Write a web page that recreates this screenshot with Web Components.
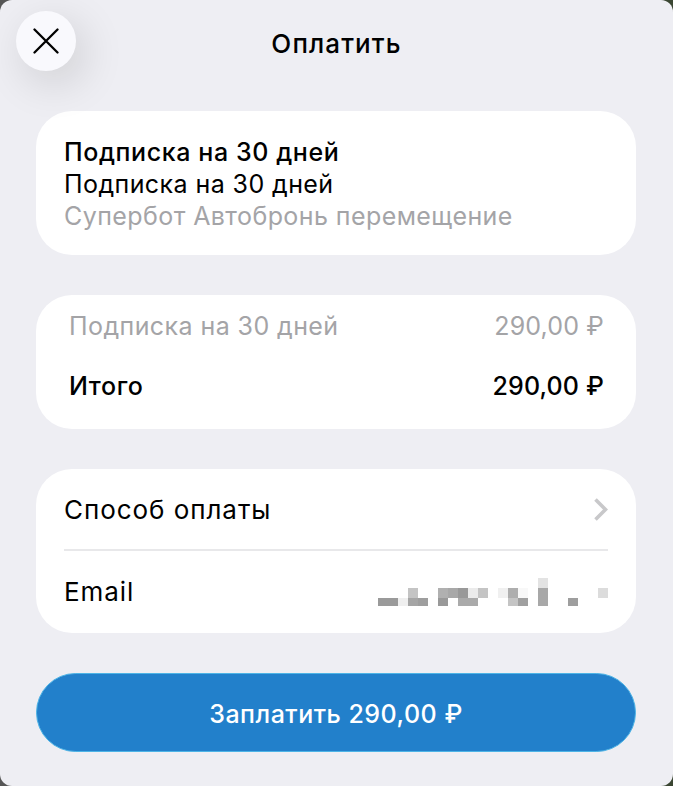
<!DOCTYPE html>
<html lang="ru">
<head>
<meta charset="utf-8">
<title>Оплатить</title>
<style>
    html, body { margin: 0; height: 100%; }
    body {
        font-family: Inter, "Noto Sans", "Liberation Sans", sans-serif;
        background: linear-gradient(to right, #565656 50%, #3a4632 50%);
    }
</style>
</head>
<body>
<pay-sheet>
    <pay-card>
        <product-info title-text="Подписка на 30 дней" line="Подписка на 30 дней" note="Супербот Автобронь перемещение"></product-info>
    </pay-card>
    <pay-card>
        <price-summary name="Подписка на 30 дней" price="290,00 ₽" total="290,00 ₽"></price-summary>
    </pay-card>
    <pay-card>
        <pay-options></pay-options>
    </pay-card>
    <pay-button>Заплатить 290,00 ₽</pay-button>
</pay-sheet>

<script>
class PaySheet extends HTMLElement {
    constructor() {
        super();
        this.attachShadow({ mode: 'open' });
        this.shadowRoot.innerHTML = `
            <style>
                :host {
                    display: block;
                    position: relative;
                    width: 673px;
                    height: 786px;
                    box-sizing: border-box;
                    overflow: hidden;
                    background: #eeeef3;
                    border-radius: 12px;
                }
                header {
                    display: flex;
                    justify-content: center;
                    align-items: center;
                    height: 87px;
                    font-size: 26px;
                    font-weight: 500;
                    letter-spacing: 1.1px;
                    color: #000;
                }
                .close {
                    position: absolute;
                    left: 16px;
                    top: 11px;
                    width: 60px;
                    height: 60px;
                    border-radius: 50%;
                    background: #f9f9fd;
                    box-shadow: 8px 12px 44px rgba(0, 0, 0, 0.14);
                    display: flex;
                    align-items: center;
                    justify-content: center;
                }
                .content {
                    display: flex;
                    flex-direction: column;
                    gap: 40px;
                    padding: 24px 37px 0 36px;
                }
            </style>
            <header>Оплатить</header>
            <div class="close">
                <svg width="26" height="26" viewBox="0 0 26 26" fill="none" stroke="#000" stroke-width="2.3" stroke-linecap="round">
                    <path d="M1.5 1.5 L24.5 24.5 M24.5 1.5 L1.5 24.5"/>
                </svg>
            </div>
            <div class="content"><slot></slot></div>
        `;
    }
}

class PayCard extends HTMLElement {
    constructor() {
        super();
        this.attachShadow({ mode: 'open' });
        this.shadowRoot.innerHTML = `
            <style>
                :host {
                    display: block;
                    background: #fff;
                    border-radius: 36px;
                }
            </style>
            <slot></slot>
        `;
    }
}

class ProductInfo extends HTMLElement {
    constructor() {
        super();
        this.attachShadow({ mode: 'open' });
    }

    connectedCallback() {
        this.shadowRoot.innerHTML = `
            <style>
                :host {
                    display: block;
                    padding: 25px 28px 23px;
                    font-size: 25px;
                    line-height: 32px;
                    letter-spacing: 0.42px;
                    color: #000;
                }
                .title { font-weight: 500; letter-spacing: 0.6px; }
                .note { color: #a4a4a7; }
            </style>
            <div class="title">${this.getAttribute('title-text')}</div>
            <div>${this.getAttribute('line')}</div>
            <div class="note">${this.getAttribute('note')}</div>
        `;
    }
}

class PriceSummary extends HTMLElement {
    constructor() {
        super();
        this.attachShadow({ mode: 'open' });
    }

    connectedCallback() {
        this.shadowRoot.innerHTML = `
            <style>
                :host {
                    display: flex;
                    flex-direction: column;
                    gap: 28px;
                    padding: 15px 32px 27px 33px;
                    font-size: 25px;
                    line-height: 32px;
                    letter-spacing: 0.42px;
                }
                .row { display: flex; justify-content: space-between; }
                .row span:last-child { letter-spacing: 0.15px; }
                .muted { color: #a4a4a7; }
                .total { font-weight: 500; color: #000; letter-spacing: 0.6px; }
            </style>
            <div class="row muted"><span>${this.getAttribute('name')}</span><span>${this.getAttribute('price')}</span></div>
            <div class="row total"><span>Итого</span><span>${this.getAttribute('total')}</span></div>
        `;
    }
}

class PayOptions extends HTMLElement {
    constructor() {
        super();
        this.attachShadow({ mode: 'open' });
        // email is blurred in the source, so it is a mosaic of grey cells
        const cells = [
            [538, 575, 10, 10, '#e3e3e3'],
            [408, 585, 10, 10, '#c4c4c4'], [438, 585, 10, 10, '#b0b0b0'], [448, 585, 10, 10, '#a8a8a8'],
            [458, 585, 10, 10, '#999'], [468, 585, 10, 10, '#ebebeb'], [478, 585, 10, 10, '#c4c4c4'],
            [498, 585, 10, 10, '#f0f0f0'], [508, 585, 10, 10, '#aeaeae'], [518, 585, 10, 10, '#f8f8f8'],
            [538, 585, 10, 10, '#a8a8a8'], [598, 585, 10, 10, '#dcdcdc'],
            [378, 595, 20, 8, '#9a9a9a'], [398, 595, 10, 8, '#efefef'], [408, 595, 10, 8, '#a5a5a5'],
            [418, 595, 10, 8, '#9e9e9e'], [438, 595, 10, 8, '#999'], [458, 595, 20, 8, '#aaa'],
            [508, 595, 10, 8, '#c4c4c4'], [518, 595, 10, 8, '#a0a0a0'], [538, 595, 10, 8, '#a8a8a8'],
            [568, 595, 10, 8, '#9e9e9e']
        ].map(([x, y, w, h, c]) => `<rect x="${x - 378}" y="${y - 575}" width="${w}" height="${h}" fill="${c}"/>`).join('');
        this.shadowRoot.innerHTML = `
            <style>
                :host {
                    display: block;
                    padding: 0 28px;
                    font-size: 26px;
                    letter-spacing: 0.95px;
                    color: #000;
                }
                .row {
                    display: flex;
                    justify-content: space-between;
                    align-items: center;
                }
                .method { height: 80px; border-bottom: 2px solid #e8e8ea; }
                .email { height: 82px; }
                .email span { padding-bottom: 1px; }
                svg { display: block; }
            </style>
            <div class="row method">
                <span>Способ оплаты</span>
                <svg width="14" height="23" viewBox="0 0 14 23" fill="none" stroke="#c8c8ca" stroke-width="3.6">
                    <path d="M1.5 1.5 L11.5 11.5 L1.5 21.5"/>
                </svg>
            </div>
            <div class="row email">
                <span>Email</span>
                <svg width="230" height="28" viewBox="0 0 230 28" shape-rendering="crispEdges">${cells}</svg>
            </div>
        `;
    }
}

class PayButton extends HTMLElement {
    constructor() {
        super();
        this.attachShadow({ mode: 'open' });
        this.shadowRoot.innerHTML = `
            <style>
                :host {
                    display: flex;
                    align-items: center;
                    justify-content: center;
                    height: 79px;
                    box-sizing: border-box;
                    background: #2280cb;
                    border: 1px solid #4db4e6;
                    border-radius: 40px;
                    padding-top: 2px;
                    color: #fff;
                    font-size: 25px;
                    font-weight: 500;
                    letter-spacing: 0.5px;
                }
            </style>
            <slot></slot>
        `;
    }
}

customElements.define('pay-sheet', PaySheet);
customElements.define('pay-card', PayCard);
customElements.define('product-info', ProductInfo);
customElements.define('price-summary', PriceSummary);
customElements.define('pay-options', PayOptions);
customElements.define('pay-button', PayButton);
</script>
</body>
</html>
